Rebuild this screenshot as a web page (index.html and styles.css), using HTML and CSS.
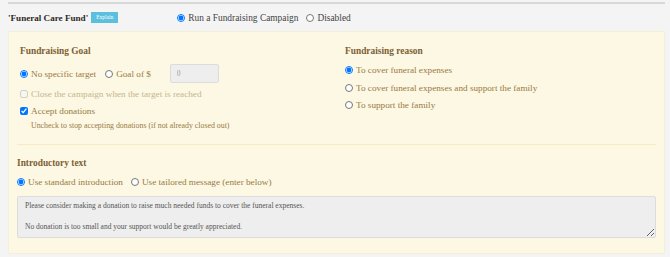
FILE: index.html
```html
<!DOCTYPE html>
<html lang="en">
<head>
	<meta charset="UTF-8">
	<title>Funeral Care Fund</title>
	<link rel="stylesheet" href="styles.css">
</head>
<body>
	<div class="topline"></div>
	<div class="fund-head">
		<span class="fund-name">'Funeral Care Fund'</span>
		<span class="explain">Explain</span>
		<div class="head-opts">
			<label class="opt"><input type="radio" name="mode" checked> Run a Fundraising Campaign</label>
			<label class="opt"><input type="radio" name="mode"> Disabled</label>
		</div>
	</div>

	<div class="panel">
		<div class="cols">
			<div class="col">
				<h4>Fundraising Goal</h4>
				<div class="row goal-row">
					<label class="opt"><input type="radio" name="goal" checked> No specific target</label>
					<label class="opt"><input type="radio" name="goal"> Goal of $</label>
					<input type="text" class="goal-amount" value="0" disabled>
				</div>
				<label class="opt line close-line muted"><input type="checkbox" disabled> Close the campaign when the target is reached</label>
				<label class="opt line"><input type="checkbox" checked> Accept donations</label>
				<p class="hint">Uncheck to stop accepting donations (if not already closed out)</p>
			</div>
			<div class="col reasons">
				<h4>Fundraising reason</h4>
				<label class="opt line"><input type="radio" name="reason" checked> To cover funeral expenses</label>
				<label class="opt line"><input type="radio" name="reason"> To cover funeral expenses and support the family</label>
				<label class="opt line"><input type="radio" name="reason"> To support the family</label>
			</div>
		</div>
		<hr>
		<h4>Introductory text</h4>
		<div class="row intro-row">
			<label class="opt"><input type="radio" name="intro" checked> Use standard introduction</label>
			<label class="opt"><input type="radio" name="intro"> Use tailored message (enter below)</label>
		</div>
		<textarea class="intro-text" disabled>Please consider making a donation to raise much needed funds to cover the funeral expenses.

No donation is too small and your support would be greatly appreciated.</textarea>
	</div>
</body>
</html>
```

FILE: styles.css
```css
body {
	font-family: "Liberation Serif", "Times New Roman", serif;
	font-size: 9.2px;
	margin: 0;
	padding: 0 5px 0 8px;
	background-color: #f4f4f4;
	color: #333;
}
label, input, textarea {
	font-family: inherit;
}
.topline {
	height: 2px;
	margin: 2px 0 0 0;
	background-color: #d8d8d8;
}
.fund-head {
	display: flex;
	align-items: center;
	height: 27px;
	font-size: 9.4px;
}
.fund-name {
	font-weight: bold;
	font-size: 9.1px;
	color: #2e2a25;
}
.explain {
	margin-left: 3px;
	background-color: #5bc0de;
	color: white;
	font-size: 5.5px;
	line-height: 11px;
	padding: 0 5px;
}
.head-opts {
	display: flex;
	margin-left: 59px;
	gap: 8px;
	color: #444;
}
.opt {
	display: flex;
	align-items: center;
	gap: 3px;
	line-height: 14px;
}
.opt input {
	margin: 0;
	width: 8px;
	height: 8px;
}
.panel {
	background-color: #fcf8e3;
	border: 1px solid #f4efd8;
	border-radius: 2px;
	padding: 13px 8px 15px 8px;
	color: #9a7945;
}
.cols {
	display: grid;
	grid-template-columns: 325px 1fr;
}
.col {
	padding-left: 3px;
}
h4 {
	margin: 0;
	font-size: 9.4px;
	line-height: 12px;
	font-weight: bold;
	color: #7d6035;
}
.row {
	display: flex;
	align-items: center;
}
.goal-row {
	margin-top: 7px;
	height: 19px;
	gap: 9px;
}
.goal-amount {
	margin-left: 10px;
	width: 49px;
	height: 19px;
	box-sizing: border-box;
	padding: 0 6px;
	font-size: 7.5px;
	background-color: #eeeeee;
	border: 1px solid #dcdcdc;
	border-radius: 2px;
	color: #999;
}
.line {
	margin-top: 3px;
}
.close-line {
	margin-top: 4px;
}
.reasons h4 {
	margin-bottom: 6px;
}
.reasons .line {
	margin-top: 3.7px;
}
.reasons h4 + .line {
	margin-top: 0;
}
.muted {
	color: #c6b591;
}
.hint {
	margin: 3px 0 0 11px;
	font-size: 7.85px;
	line-height: 10px;
}
hr {
	border: 0;
	border-top: 1px solid #f6ebc3;
	margin: 13px 0 12px 0;
}
.intro-row {
	margin-top: 6px;
	gap: 8px;
}
.intro-text {
	display: block;
	width: 100%;
	box-sizing: border-box;
	height: 42px;
	margin-top: 7px;
	padding: 4px 7px;
	font-size: 7.5px;
	line-height: 10.5px;
	color: #555;
	background-color: #eeeeee;
	border: 1px solid #dcdcdc;
	border-radius: 2px;
	resize: vertical;
	overflow: hidden;
}
```
